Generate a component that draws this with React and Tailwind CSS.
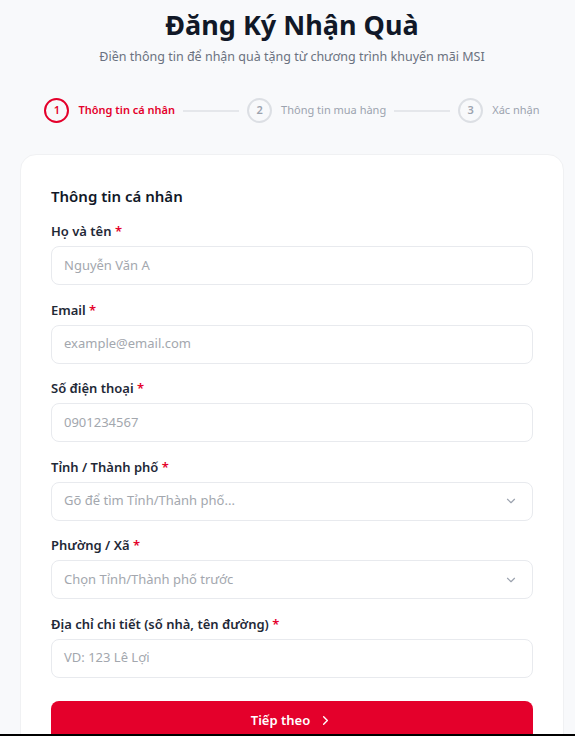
import React from "react";
import { ChevronDown, ChevronRight } from "lucide-react";

const fields = [
    { label: "Họ và tên", placeholder: "Nguyễn Văn A" },
    { label: "Email", placeholder: "example@email.com" },
    { label: "Số điện thoại", placeholder: "0901234567" },
    { label: "Tỉnh / Thành phố", placeholder: "Gõ để tìm Tỉnh/Thành phố...", select: true },
    { label: "Phường / Xã", placeholder: "Chọn Tỉnh/Thành phố trước", select: true },
    { label: "Địa chỉ chi tiết (số nhà, tên đường)", placeholder: "VD: 123 Lê Lợi" },
];

const steps = ["Thông tin cá nhân", "Thông tin mua hàng", "Xác nhận"];

function Step({ num, label, active }) {
    return (
        <div className="flex items-center gap-[9px]">
            <div
                className={
                    active
                        ? "flex h-[25px] w-[25px] items-center justify-center rounded-full border-2 border-[#e4002b] text-[11px] font-semibold text-[#e4002b]"
                        : "flex h-[25px] w-[25px] items-center justify-center rounded-full border-2 border-[#dcdfe4] text-[11px] font-semibold text-[#9ca3af]"
                }
            >
                {num}
            </div>
            <span
                className={
                    active
                        ? "text-[11px] font-semibold text-[#e4002b]"
                        : "text-[11px] text-[#9ca3af]"
                }
            >
                {label}
            </span>
        </div>
    );
}

function Field({ label, placeholder, select }) {
    return (
        <div className="flex flex-col">
            <label className="mb-[5px] text-[13px] leading-[20px] font-semibold text-[#1f2937]">
                {label} <span className="text-[#e4002b]">*</span>
            </label>
            <div className="flex h-[39px] items-center justify-between rounded-lg border border-[#e8eaee] bg-white px-3">
                <span className="text-[13px] text-[#a3a7ae]">{placeholder}</span>
                {select && <ChevronDown size={14} strokeWidth={2} className="mr-[2px] text-[#9ca3af]" />}
            </div>
        </div>
    );
}

export default function App() {
    return (
        <div
            className="h-[736px] w-[575px] overflow-hidden border-b-2 border-black bg-[#f8f9fb]"
            style={{ fontFamily: '"Noto Sans", "Open Sans", sans-serif' }}
        >
            <div className="w-[584px]">
                {/* 머리말 */}
                <div className="pt-[7px] text-center">
                    <h1 className="text-[27px] leading-[36px] font-bold text-[#111827]">Đăng Ký Nhận Quà</h1>
                    <p className="mt-[4px] text-[12.5px] leading-[20px] text-[#6b7280]">
                        Điền thông tin để nhận quà tặng từ chương trình khuyến mãi MSI
                    </p>
                </div>

                {/* 단계 */}
                <div className="mt-[31px] flex items-center justify-center">
                    <Step num="1" label={steps[0]} active />
                    <div className="mx-2 h-[2px] w-[56px] bg-[#e5e7eb]" />
                    <Step num="2" label={steps[1]} />
                    <div className="mx-2 h-[2px] w-[56px] bg-[#e5e7eb]" />
                    <Step num="3" label={steps[2]} />
                </div>

                {/* 카드 */}
                <div className="mx-5 mt-[31px] rounded-2xl border border-[#f0f1f3] bg-white px-[30px] pt-[29px] pb-8">
                    <h2 className="text-[15px] leading-[24px] font-semibold text-[#111827]">Thông tin cá nhân</h2>
                    <div className="mt-[13px] flex flex-col gap-[14.5px]">
                        {fields.map((f) => (
                            <Field key={f.label} {...f} />
                        ))}
                    </div>
                    <button className="mt-[23px] flex h-[40px] w-full items-center justify-center gap-2 rounded-lg bg-[#e4002b] text-[13px] font-semibold text-white">
                        Tiếp theo
                        <ChevronRight size={15} strokeWidth={2.2} />
                    </button>
                </div>
            </div>
        </div>
    );
}
